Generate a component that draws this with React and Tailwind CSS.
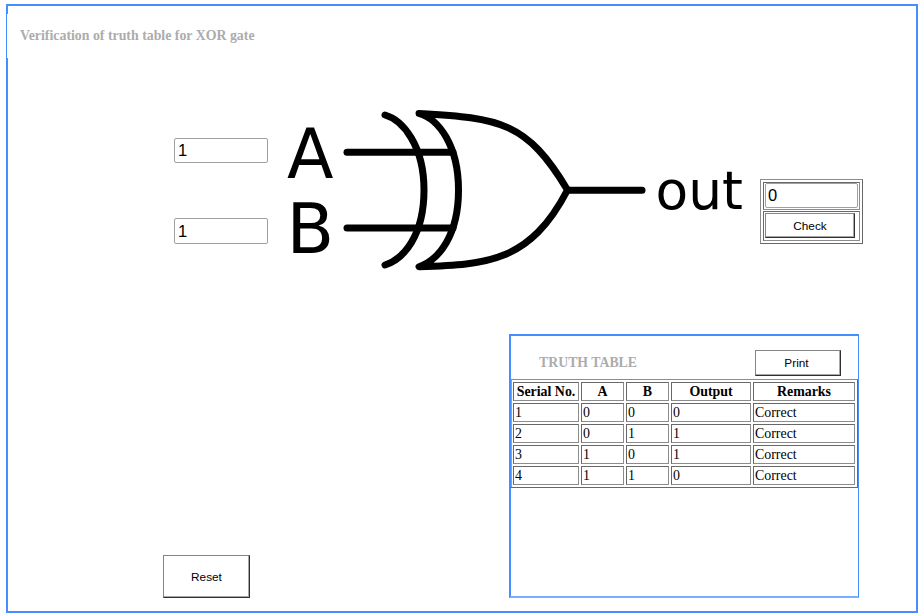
const rows = [
  ["1", "0", "0", "0", "Correct"],
  ["2", "0", "1", "1", "Correct"],
  ["3", "1", "0", "1", "Correct"],
  ["4", "1", "1", "0", "Correct"],
];

const columns = ["Serial No.", "A", "B", "Output", "Remarks"];

const cellBorder = "border border-t-[#686868] border-l-[#686868] border-b-[#8c8c8c] border-r-[#8c8c8c]";
const inputStyle =
  "block rounded-[2px] border border-[#a0a0a0] bg-white font-['Liberation_Sans',Arial,sans-serif] text-[16.5px] text-black outline-none";
const buttonStyle =
  "block border border-t-[#858585] border-l-[#858585] border-r-[#303030] border-b-[#303030] bg-white pt-[2px] font-['Liberation_Sans',Arial,sans-serif] text-[11.8px] text-black shadow-[inset_-1px_-1px_0_#a8a8a8]";

function XorGate() {
  return (
    <svg width="470" height="180" viewBox="280 100 470 180" className="block shrink-0">
      <g fill="none" stroke="#000" strokeWidth="7" strokeLinecap="round" strokeLinejoin="round">
        <path d="M347 152.3H453" />
        <path d="M347 228H453" />
        <path d="M568 190.2H642" />
        <path d="M385 115C403 120 424 146 424 190C424 235 404 259 385 265" />
        <path d="M419 113.5C439 119 458.5 146 458.5 190C458.5 235 439 260 419 266.7C488 264.5 530 262 567.5 190C527 122 500 118 419 113.5Z" />
      </g>
      <g className="font-['DejaVu_Sans',sans-serif]" fill="#000">
        <text x="287" y="177.7" fontSize="69" textLength="46.5" lengthAdjust="spacingAndGlyphs">A</text>
        <text x="286.5" y="253" fontSize="69.5">B</text>
        <text x="655.5" y="209" fontSize="54" textLength="87.5" lengthAdjust="spacingAndGlyphs">out</text>
      </g>
    </svg>
  );
}

function TruthTable() {
  return (
    <section className="ml-[501px] h-[264px] w-[350px] border-2 border-r border-[#438fff] border-b-[#78b0ff]">
      <div className="flex h-[43px] items-start justify-between pt-[14px] pr-[17px] pl-[28px]">
        <h2 className="mt-[5px] text-[13.8px] leading-4 font-bold text-[#acacac]">TRUTH TABLE</h2>
        <button className={`${buttonStyle} h-[26px] w-[86px] pr-[3px]`}>Print</button>
      </div>
      <table className="ml-[-1px] w-[348px] table-fixed border-separate border-spacing-[2px] border border-t-[#8c8c8c] border-r-[#686868] border-b-[#686868] border-l-transparent text-[13.9px] leading-[17px] text-black shadow-[inset_1px_0_0_#a0a0a0]">
        <colgroup>
          <col className="w-[66px]" />
          <col className="w-[43px]" />
          <col className="w-[43px]" />
          <col className="w-[80px]" />
          <col />
        </colgroup>
        <thead>
          <tr>
            {columns.map((c) => (
              <th key={c} className={`${cellBorder} p-0 font-bold`}>{c}</th>
            ))}
          </tr>
        </thead>
        <tbody>
          {rows.map((row) => (
            <tr key={row[0]}>
              {row.map((value, i) => (
                <td key={i} className={`${cellBorder} py-0 pr-0 pl-px text-left`}>{value}</td>
              ))}
            </tr>
          ))}
        </tbody>
      </table>
    </section>
  );
}

export default function App() {
  return (
    <div className="h-[616px] w-[921px] overflow-hidden bg-white pt-[4px] pl-[6px] font-['Liberation_Serif','Times_New_Roman',serif]">
      <main className="h-[609px] w-[912px] border-2 border-[#438fff]">
        <div className="h-[94px] pt-2">
          <h1 className="ml-[-1px] h-[44px] bg-white pt-[14px] pl-[13px] text-[13.85px] leading-4 font-bold text-[#acacac]">
            Verification of truth table for XOR gate
          </h1>
        </div>
        <div className="flex h-[234px] items-start">
          <div className="mt-[38px] ml-[166px] flex w-[106px] shrink-0 flex-col gap-[55px]">
            <input defaultValue="1" className={`${inputStyle} h-[25px] w-[94px] px-[3px]`} />
            <input defaultValue="1" className={`${inputStyle} h-[26px] w-[94px] px-[3px]`} />
          </div>
          <XorGate />
          <div className="mt-[79px] ml-[10px] flex h-[65px] w-[103px] shrink-0 flex-col gap-px border border-t-[#8c8c8c] border-r-[#686868] border-b-[#686868] border-l-[#8c8c8c] p-[2px]">
            <div className={`${cellBorder} h-[28px] px-px`}>
              <input defaultValue="0" className={`${inputStyle} h-[25px] w-[93px] px-[2px]`} />
            </div>
            <div className={`${cellBorder} h-[30px] p-px`}>
              <button className={`${buttonStyle} h-[25px] w-[90px]`}>Check</button>
            </div>
          </div>
        </div>
        <div className="flex items-end">
          <button className={`${buttonStyle} ml-[155px] h-[43px] w-[87px] shrink-0`}>Reset</button>
          <div className="ml-[-242px]">
            <TruthTable />
          </div>
        </div>
      </main>
    </div>
  );
}
